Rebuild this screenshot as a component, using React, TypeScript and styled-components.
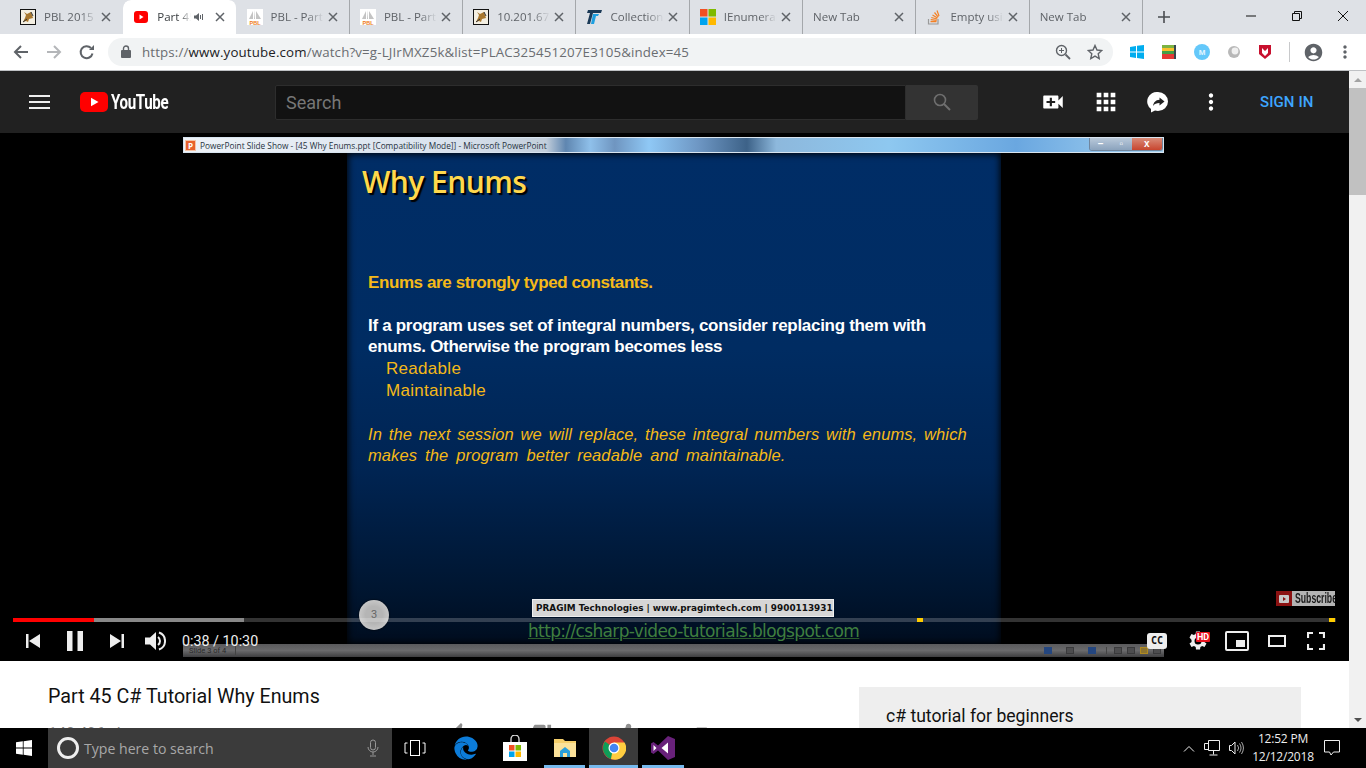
import React from "react";
import styled, { createGlobalStyle } from "styled-components";
import {
  MdThumbUp,
  MdThumbDown,
  MdShare,
  MdPlaylistAdd,
  MdVideoCall,
  MdApps,
  MdMoreVert,
  MdAccountCircle,
} from "react-icons/md";
import { FaEdge } from "react-icons/fa";

const Global = createGlobalStyle`
  html, body { margin: 0; padding: 0; overflow: hidden; background: #fff; }
  * { box-sizing: border-box; }
  svg { display: block; flex: none; }
`;

const Screen = styled.div`
  width: 1366px;
  height: 768px;
  display: flex;
  flex-direction: column;
  font-family: Roboto, "Liberation Sans", sans-serif;
  overflow: hidden;
`;

/* ---- chrome tab strip ---- */
const TabStrip = styled.div`
  height: 34px;
  background: #dee1e6;
  display: flex;
  padding-left: 10px;
  flex: none;
`;
const TabBox = styled.div<{ $active?: boolean; $sep?: boolean }>`
  width: 113.3px;
  height: 34px;
  display: flex;
  align-items: center;
  padding: 0 11px 1px 10px;
  flex: none;
  background: ${(p) => (p.$active ? "#fff" : "transparent")};
  border-radius: ${(p) => (p.$active ? "8px 8px 0 0" : "0")};
  border-right: 1px solid ${(p) => (p.$sep ? "#a4a7ab" : "transparent")};
  background-clip: padding-box;
`;
const TabIconSlot = styled.div`
  width: 16px;
  height: 16px;
  margin-right: 8px;
  flex: none;
`;
const TabTitle = styled.div<{ $active?: boolean }>`
  flex: 1;
  min-width: 0;
  font-family: "Open Sans", "Liberation Sans", sans-serif;
  font-size: 11.5px;
  white-space: nowrap;
  overflow: hidden;
  color: ${(p) => (p.$active ? "#3c4043" : "#5f6368")};
  -webkit-mask-image: linear-gradient(to right, #000 68%, transparent 100%);
  mask-image: linear-gradient(to right, #000 68%, transparent 100%);
`;
const TabClose = styled.div`
  width: 10px;
  height: 10px;
  flex: none;
  margin-left: 4px;
`;
const NewTab = styled.div`
  width: 42px;
  display: flex;
  align-items: center;
  justify-content: center;
`;
const WindowButtons = styled.div`
  margin-left: auto;
  display: flex;
`;
const WindowButton = styled.div`
  width: 46px;
  height: 32px;
  display: flex;
  align-items: center;
  justify-content: center;
`;

/* ---- chrome toolbar ---- */
const Toolbar = styled.div`
  height: 37px;
  background: #fff;
  border-bottom: 1px solid #bfc1c4;
  display: flex;
  align-items: center;
  padding-left: 12px;
  flex: none;
`;
const NavIcon = styled.div`
  width: 33px;
  height: 28px;
  display: flex;
  align-items: center;
  justify-content: flex-start;
  padding-left: 1px;
`;
const Omnibox = styled.div`
  width: 1005px;
  height: 28px;
  margin-left: -3px;
  margin-bottom: 1px;
  border-radius: 14px;
  background: #f1f3f4;
  display: flex;
  align-items: center;
  padding: 0 10px 0 13px;
`;
const Url = styled.div`
  margin-left: 11px;
  font-family: "Open Sans", "Liberation Sans", sans-serif;
  font-size: 13.3px;
  letter-spacing: 0.15px;
  color: #6a6d71;
  white-space: nowrap;
  flex: 1;
  b {
    font-weight: 400;
    color: #202124;
  }
`;
const OmniIcons = styled.div`
  display: flex;
  gap: 16px;
  align-items: center;
`;
const ExtIcons = styled.div`
  display: flex;
  align-items: center;
  gap: 16px;
  margin-left: 16px;
`;
const ToolbarDivider = styled.div`
  width: 1px;
  height: 20px;
  background: #c8c9cb;
  margin: 0 13px 0 16px;
`;

/* ---- page ---- */
const Viewport = styled.div`
  flex: 1;
  min-height: 0;
  display: flex;
`;
const Page = styled.div`
  flex: 1;
  min-width: 0;
  overflow: hidden;
  display: flex;
  flex-direction: column;
`;
const Scrollbar = styled.div`
  width: 17px;
  background: #f1f1f1;
  display: flex;
  flex-direction: column;
  align-items: center;
  flex: none;
`;
const ScrollArrow = styled.div<{ $down?: boolean }>`
  height: 17px;
  width: 100%;
  display: flex;
  align-items: center;
  justify-content: center;
  &::after {
    content: "";
    border-left: 4px solid transparent;
    border-right: 4px solid transparent;
    ${(p) => (p.$down ? "border-top: 4px solid #505050;" : "border-bottom: 4px solid #a3a3a3;")}
  }
`;
const ScrollThumb = styled.div`
  width: 100%;
  height: 107px;
  background: #c1c1c1;
`;
const ScrollTrack = styled.div`
  flex: 1;
`;

const Masthead = styled.header`
  height: 62px;
  background: #212121;
  display: flex;
  align-items: center;
  flex: none;
  padding-left: 29px;
`;
const Burger = styled.div`
  width: 21px;
  height: 14px;
  border-top: 2px solid #eee;
  border-bottom: 2px solid #eee;
  position: relative;
  margin-right: 30px;
  &::after {
    content: "";
    position: absolute;
    left: 0;
    right: 0;
    top: 4px;
    height: 2px;
    background: #eee;
  }
`;
const Logo = styled.div`
  width: 167px;
  display: flex;
  align-items: center;
  gap: 3px;
  margin-right: 28px;
`;
const LogoWord = styled.span`
  display: inline-block;
  font-family: Roboto, sans-serif;
  font-weight: 700;
  font-size: 21px;
  letter-spacing: -0.5px;
  color: #fff;
  transform: scaleX(0.72);
  transform-origin: left center;
`;
const SearchBox = styled.div`
  width: 703px;
  height: 35px;
  display: flex;
  margin-right: 49px;
`;
const SearchInput = styled.div`
  flex: 1;
  background: #121212;
  border: 1px solid #2d2d2d;
  border-radius: 2px 0 0 2px;
  color: #777;
  font-size: 18px;
  line-height: 33px;
  padding-left: 10px;
`;
const SearchButton = styled.div`
  width: 72px;
  background: #333;
  border-radius: 0 2px 2px 0;
  display: flex;
  align-items: center;
  justify-content: center;
`;
const HeadIcons = styled.div`
  display: flex;
  align-items: center;
`;
const HeadIcon = styled.div`
  width: 52.5px;
  display: flex;
  justify-content: center;
`;
const SignIn = styled.div`
  margin-left: 23px;
  color: #3ea6ff;
  font-size: 15px;
  font-weight: 500;
  letter-spacing: 0.1px;
`;

/* ---- video ---- */
const Video = styled.section`
  height: 528px;
  background: #000;
  position: relative;
  flex: none;
  padding: 4px 0 0 183px;
  overflow: hidden;
`;
const SlideShow = styled.div`
  width: 981px;
  display: flex;
  flex-direction: column;
`;
const PptBar = styled.div`
  height: 16px;
  border: 1px solid #d8e4ef;
  background: linear-gradient(
    to right,
    #eef3f8 0%,
    #d8e1ec 28%,
    #c2cedb 37%,
    #5f86b0 39%,
    #8fc0ea 41.5%,
    #6f95c0 44%,
    #8fc8f5 47.5%,
    #6e97c4 52.5%,
    #3d6288 57.5%,
    #8db8dc 60.5%,
    #8ec8f0 72%,
    #6aa7e0 85%,
    #a6d4f2 100%
  );
  display: flex;
  align-items: center;
  padding-left: 1px;
  font-family: "Open Sans", "Liberation Sans", sans-serif;
  font-size: 8.3px;
  color: #26323e;
  white-space: nowrap;
`;
const PptLogo = styled.div`
  width: 11px;
  height: 11px;
  background: #e8622c;
  border: 1px solid #f5c4a8;
  color: #fff;
  font-size: 8px;
  font-weight: 700;
  line-height: 9px;
  text-align: center;
  margin-right: 4px;
`;
const PptButtons = styled.div`
  margin-left: auto;
  height: 13px;
  margin-top: -2px;
  width: 74px;
  display: flex;
  border: 1px solid #70869e;
  border-top: 0;
  border-radius: 0 0 3px 3px;
  overflow: hidden;
`;
const PptBtn = styled.div<{ $close?: boolean; $wide?: boolean }>`
  flex: ${(p) => (p.$wide ? 1.45 : 1)};
  background: ${(p) =>
    p.$close
      ? "linear-gradient(#d98b78, #c8452e)"
      : "linear-gradient(#b9c9da, #8ba3bd)"};
  color: #fff;
  font-size: 10px;
  font-weight: 700;
  font-family: "Liberation Sans", sans-serif;
  line-height: 12px;
  text-align: center;
`;
const Slide = styled.div`
  width: 654px;
  height: 491px;
  margin-left: 164px;
  padding: 11px 21px 0;
  display: flex;
  flex-direction: column;
  background: linear-gradient(#002d66 0%, #002c62 40%, #002452 65%, #00152f 90%, #000d1f 100%);
  box-shadow: inset 0 0 7px 1px #000;
  font-family: "Liberation Sans", sans-serif;
`;
const SlideTitle = styled.h1`
  margin: 0 0 0 -6px;
  font-family: "Open Sans", "Liberation Sans", sans-serif;
  font-size: 30px;
  line-height: 36px;
  font-weight: 600;
  letter-spacing: -0.55px;
  color: #ffd84d;
  text-shadow: 2px 2px 1px #000;
`;
const SlideLine = styled.p<{ $tone: "gold" | "white"; $gap?: number }>`
  margin: ${(p) => p.$gap ?? 0}px 0 0;
  font-size: 17px;
  line-height: 21.7px;
  font-weight: 700;
  letter-spacing: ${(p) => (p.$tone === "gold" ? "-0.4px" : "-0.3px")};
  color: ${(p) => (p.$tone === "gold" ? "#f5b918" : "#fff")};
  white-space: nowrap;
`;
const SlideItem = styled.p`
  margin: 0 0 0 18px;
  font-size: 17px;
  line-height: 21.7px;
  letter-spacing: 0.3px;
  color: #f5b918;
  white-space: nowrap;
`;
const SlideNote = styled.p<{ $gap?: number; $spread: number }>`
  margin: ${(p) => p.$gap ?? 0}px 0 0;
  font-size: 16.5px;
  line-height: 21.5px;
  font-style: italic;
  color: #f5b918;
  word-spacing: ${(p) => p.$spread}px;
  letter-spacing: 0.1px;
  white-space: nowrap;
`;
const CompanyTag = styled.div`
  margin-top: auto;
  margin-left: 164px;
  width: 302px;
  height: 18px;
  background: #d6d6d6;
  border: 1px solid #eee;
  color: #111;
  font-size: 8.9px;
  font-weight: 700;
  line-height: 16px;
  padding-left: 3px;
  font-family: "DejaVu Sans", sans-serif;
  white-space: nowrap;
  overflow: hidden;
`;
const SiteLink = styled.div`
  margin: 4px 0 3px 160px;
  color: #3f7f3f;
  font-size: 17px;
  line-height: 20px;
  text-decoration: underline;
  text-decoration-color: #2c5c2c;
  font-family: "DejaVu Sans", sans-serif;
  letter-spacing: -0.65px;
  white-space: nowrap;
`;
const PptStatus = styled.div`
  width: 981px;
  height: 13px;
  background: linear-gradient(#5a5a5c, #6a6a6c 50%, #3e3e40);
  display: flex;
  align-items: center;
`;
const SlideCount = styled.span`
  width: 53px;
  padding-left: 6px;
  font-size: 7.5px;
  color: #2a2a2a;
  border-right: 1px solid #444;
  white-space: nowrap;
`;
const PptNav = styled.div`
  margin-left: auto;
  display: flex;
  align-items: center;
  gap: 14px;
  padding-right: 10px;
  margin-right: 7px;
  border-right: 1px solid #444;
`;
const PptViews = styled.div`
  display: flex;
  align-items: center;
  gap: 5px;
  padding-right: 3px;
`;
const PptDot = styled.div<{ $tint?: "blue" | "gold" }>`
  width: 8px;
  height: 7px;
  background: ${(p) =>
    p.$tint === "blue" ? "#24467f" : p.$tint === "gold" ? "#8d7430" : "#4d4d4f"};
  border: 1px solid ${(p) =>
    p.$tint === "blue" ? "#24467f" : p.$tint === "gold" ? "#b08a20" : "#3a3a3c"};
`;

const Subscribe = styled.div`
  position: absolute;
  left: 1276px;
  top: 458px;
  height: 15px;
  width: 59px;
  display: flex;
  background: #b4b4b4;
  overflow: hidden;
`;
const SubscribeMark = styled.div`
  width: 16px;
  background: #8b1212;
  display: flex;
  align-items: center;
  justify-content: center;
  flex: none;
`;
const SubscribeWord = styled.span`
  display: inline-block;
  margin-left: 3px;
  font-family: "Liberation Sans", sans-serif;
  font-weight: 700;
  font-size: 14px;
  line-height: 15px;
  color: #1a1a1a;
  transform: scaleX(0.62);
  transform-origin: left center;
  white-space: nowrap;
`;
const SlideCursor = styled.div`
  position: absolute;
  left: 359px;
  top: 467px;
  width: 30px;
  height: 30px;
  border-radius: 50%;
  background: radial-gradient(#b5b5b5 40%, #d8d8d8 100%);
  color: #666;
  font-size: 11px;
  line-height: 30px;
  text-align: center;
  box-shadow: 0 0 2px #000;
`;
const Progress = styled.div`
  position: absolute;
  left: 13px;
  right: 13px;
  top: 485px;
  height: 4px;
  background: rgba(255, 255, 255, 0.2);
  display: flex;
`;
const ProgressPlayed = styled.div`
  width: 81px;
  background: #f00;
`;
const ProgressBuffered = styled.div`
  width: 150px;
  background: rgba(255, 255, 255, 0.42);
`;
const AdMark = styled.div<{ $at: number }>`
  position: absolute;
  left: ${(p) => p.$at}px;
  top: 0;
  width: 6px;
  height: 4px;
  background: #fc0;
`;
const Controls = styled.div`
  position: absolute;
  left: 0;
  right: 0;
  bottom: 0;
  height: 40px;
  display: flex;
  align-items: center;
  padding: 0 13px 0 20px;
  color: #eee;
`;
const CtlButton = styled.div<{ $w: number }>`
  width: ${(p) => p.$w}px;
  display: flex;
  justify-content: center;
  position: relative;
  flex: none;
`;
const TimeText = styled.span`
  font-size: 14.3px;
  color: #eee;
  margin-left: 1px;
`;
const CtlRight = styled.div`
  margin-left: auto;
  display: flex;
  align-items: center;
`;
const CcBox = styled.div`
  width: 20px;
  height: 16px;
  background: #eee;
  border-radius: 3px;
  color: #111;
  font-family: "DejaVu Sans Mono", monospace;
  font-weight: 700;
  font-size: 10px;
  line-height: 16px;
  text-align: center;
`;
const HdBadge = styled.span`
  position: absolute;
  top: 3px;
  left: 19px;
  background: #e8101c;
  color: #fff;
  font-size: 9px;
  font-weight: 700;
  line-height: 10px;
  padding: 0 1px;
  border-radius: 1px;
`;

/* ---- below the video ---- */
const Below = styled.div`
  flex: 1;
  display: flex;
  background: #fff;
  padding-left: 48px;
`;
const Primary = styled.div`
  width: 811px;
  padding-top: 24px;
  flex: none;
`;
const VideoTitle = styled.h2`
  margin: 0;
  font-size: 19.7px;
  font-weight: 400;
  line-height: 24px;
  color: #111;
`;
const MetaRow = styled.div`
  display: flex;
  align-items: center;
  margin-top: 12px;
  height: 24px;
`;
const Views = styled.span`
  color: #888;
  font-size: 16px;
  width: 400px;
`;
const Actions = styled.div`
  display: flex;
  gap: 60px;
  color: #909090;
`;
const Sidebar = styled.aside`
  width: 442px;
  height: 80px;
  margin-top: 26px;
  background: #eee;
  padding: 18px 27px;
  font-size: 17.6px;
  line-height: 22px;
  color: #111;
`;

/* ---- windows taskbar ---- */
const Taskbar = styled.footer`
  height: 40px;
  background: #000;
  display: flex;
  align-items: stretch;
  flex: none;
  color: #fff;
`;
const StartButton = styled.div`
  width: 48px;
  display: flex;
  align-items: center;
  justify-content: center;
`;
const WinSearch = styled.div`
  width: 344px;
  background: #3b3b3b;
  display: flex;
  align-items: center;
  padding: 0 13px 0 9px;
`;
const Cortana = styled.div`
  width: 22px;
  height: 22px;
  border: 3px solid #eee;
  border-radius: 50%;
  margin-right: 5px;
`;
const WinSearchText = styled.span`
  flex: 1;
  font-family: "Open Sans", "Liberation Sans", sans-serif;
  font-size: 14.1px;
  color: #a8a8a8;
`;
const TaskButton = styled.div<{ $open?: boolean; $current?: boolean }>`
  width: 49.3px;
  display: flex;
  align-items: center;
  justify-content: center;
  position: relative;
  background: ${(p) => (p.$current ? "#3b3b3b" : "transparent")};
  ${(p) =>
    p.$open &&
    `&::after {
      content: "";
      position: absolute;
      left: ${p.$current ? 0 : 4}px;
      right: ${p.$current ? 0 : 4}px;
      bottom: 0;
      height: 3px;
      background: #76b9ed;
    }`}
`;
const TaskButtons = styled.div`
  display: flex;
`;
const Tray = styled.div`
  margin-left: auto;
  display: flex;
  align-items: center;
  padding-right: 26px;
`;
const TrayIcons = styled.div`
  display: flex;
  align-items: center;
  gap: 9px;
`;
const Clock = styled.div`
  width: 70px;
  margin: 0 6px 0 3px;
  text-align: center;
  font-family: "Open Sans", "Liberation Sans", sans-serif;
  font-size: 12px;
  line-height: 18px;
  color: #eee;
  letter-spacing: -0.2px;
`;

/* ---- small drawings ---- */
const Cross = ({ color = "#5f6368" }: { color?: string }) => (
  <svg width="10" height="10" viewBox="0 0 10 10">
    <path d="M1 1l8 8M9 1l-8 8" stroke={color} strokeWidth="1.5" />
  </svg>
);
const TomcatIcon = () => (
  <svg width="16" height="16" viewBox="0 0 16 16">
    <rect x=".5" y=".5" width="15" height="15" fill="#f4efe2" stroke="#111" />
    <path d="M3 13l2-4 1-3-2-3 3 2 4-2 1 3 1 3-4 1-1 3-2-1z" fill="#a9782f" />
    <path d="M3 13l4-3M11 3l2 4" stroke="#333" />
  </svg>
);
const PblIcon = () => (
  <svg width="16" height="16" viewBox="0 0 16 16">
    <rect width="16" height="16" fill="#fff" />
    <path d="M2 10l4-8v8zM7 10V1l1 9zM9 2l5 8H9z" fill="#c3c3c3" />
    <text x="8" y="15.500" textAnchor="middle" fontSize="5.500" fontWeight="700" fill="#ee7b22" fontFamily="Liberation Sans">PBL</text>
  </svg>
);
const YtFavicon = () => (
  <svg width="16" height="16" viewBox="0 0 16 16">
    <rect x="1" y="2" width="14" height="12" rx="3" fill="#f00" />
    <path d="M6.500 5.500l4 2.500-4 2.500z" fill="#fff" />
  </svg>
);
const TIcon = () => (
  <svg width="16" height="16" viewBox="0 0 16 16">
    <path d="M2 1h14l-1 3H7L4 15H1L4 4H1z" fill="#1b3a57" />
    <path d="M7 5h6l-1 2h-2L8 15H5z" fill="#1e9fe0" />
  </svg>
);
const MsIcon = () => (
  <svg width="16" height="16" viewBox="0 0 16 16">
    <rect width="7.500" height="7.500" fill="#f25022" />
    <rect x="8.500" width="7.500" height="7.500" fill="#7fba00" />
    <rect y="8.500" width="7.500" height="7.500" fill="#00a4ef" />
    <rect x="8.500" y="8.500" width="7.500" height="7.500" fill="#ffb900" />
  </svg>
);
const SoIcon = () => (
  <svg width="16" height="16" viewBox="0 0 16 16">
    <path d="M2.500 10v5h9.500v-5" fill="none" stroke="#9a9a9a" strokeWidth="1.200" />
    <path d="M4.500 12.700h6M4.700 10.700l6 .6M5.300 8.500l5.800 1.500M6.500 6l5 3M8.500 3.500l3.800 4.600M11 1.500l2 5.500" stroke="#f48024" strokeWidth="1.200" fill="none" />
  </svg>
);

const tabs = [
  { title: "PBL 2015", icon: <TomcatIcon /> },
  { title: "Part 45 C# Tutorial", icon: <YtFavicon />, active: true },
  { title: "PBL - Part 45", icon: <PblIcon />, sep: true },
  { title: "PBL - Part 46", icon: <PblIcon />, sep: true },
  { title: "10.201.67.12", icon: <TomcatIcon />, sep: true },
  { title: "Collections in", icon: <TIcon />, sep: true },
  { title: "IEnumerable", icon: <MsIcon />, sep: true },
  { title: "New Tab", sep: true },
  { title: "Empty using", icon: <SoIcon />, sep: true },
  { title: "New Tab", sep: true },
];

const SpeakerTiny = () => (
  <svg width="12" height="12" viewBox="0 0 12 12" style={{ marginLeft: 2, marginRight: 6 }}>
    <path d="M1 4.500h2L6 2v8L3 7.500H1z" fill="#5f6368" />
    <path d="M7.500 4v4M9.500 3v6" stroke="#5f6368" />
  </svg>
);

function App() {
  return (
    <Screen>
      <Global />
      <TabStrip>
        {tabs.map((t, i) => (
          <TabBox key={i} $active={t.active} $sep={t.sep}>
            {t.icon ? <TabIconSlot>{t.icon}</TabIconSlot> : null}
            <TabTitle $active={t.active}>{t.title}</TabTitle>
            {t.active ? <SpeakerTiny /> : null}
            <TabClose>
              <Cross />
            </TabClose>
          </TabBox>
        ))}
        <NewTab>
          <svg width="12" height="12" viewBox="0 0 12 12">
            <path d="M6 0v12M0 6h12" stroke="#4a4d51" strokeWidth="1.600" />
          </svg>
        </NewTab>
        <WindowButtons>
          <WindowButton>
            <svg width="10" height="10" viewBox="0 0 10 10">
              <path d="M0 5h10" stroke="#111" />
            </svg>
          </WindowButton>
          <WindowButton>
            <svg width="10" height="10" viewBox="0 0 10 10">
              <path d="M.5 2.500h7v7h-7zM2.500 2.500v-2h7v7h-2" fill="none" stroke="#111" />
            </svg>
          </WindowButton>
          <WindowButton>
            <svg width="10" height="10" viewBox="0 0 10 10">
              <path d="M0 0l10 10M10 0L0 10" stroke="#111" />
            </svg>
          </WindowButton>
        </WindowButtons>
      </TabStrip>

      <Toolbar>
        <NavIcon>
          <svg width="16" height="16" viewBox="0 0 16 16">
            <path d="M15 8H2M8 2L2 8l6 6" fill="none" stroke="#5f6368" strokeWidth="2" />
          </svg>
        </NavIcon>
        <NavIcon>
          <svg width="16" height="16" viewBox="0 0 16 16">
            <path d="M1 8h13M8 2l6 6-6 6" fill="none" stroke="#b4b6b9" strokeWidth="2" />
          </svg>
        </NavIcon>
        <NavIcon>
          <svg width="16" height="16" viewBox="0 0 16 16">
            <path d="M13.500 9.500A6 6 0 1 1 12 4" fill="none" stroke="#5f6368" strokeWidth="2" />
            <path d="M10 6h5V1z" fill="#5f6368" />
          </svg>
        </NavIcon>
        <Omnibox>
          <svg width="10" height="13" viewBox="0 0 10 13">
            <path d="M2.500 5V3.500a2.500 2.500 0 0 1 5 0V5" fill="none" stroke="#5f6368" strokeWidth="1.400" />
            <rect y="5" width="10" height="8" rx="1" fill="#5f6368" />
          </svg>
          <Url>
            https://<b>www.youtube.com</b>/watch?v=g-LJIrMXZ5k&amp;list=PLAC325451207E3105&amp;index=45
          </Url>
          <OmniIcons>
            <svg width="16" height="16" viewBox="0 0 16 16">
              <circle cx="6.500" cy="6.500" r="5" fill="none" stroke="#5f6368" strokeWidth="1.400" />
              <path d="M10.500 10.500L15 15" stroke="#5f6368" strokeWidth="1.800" />
              <path d="M6.500 4v5M4 6.500h5" stroke="#5f6368" />
            </svg>
            <svg width="16" height="16" viewBox="0 0 16 16">
              <path d="M8 1.500l2 4.500 4.800.5-3.600 3.200 1 4.800L8 12.100l-4.200 2.400 1-4.800L1.200 6.500 6 6z" fill="none" stroke="#5f6368" strokeWidth="1.400" />
            </svg>
          </OmniIcons>
        </Omnibox>
        <ExtIcons>
          <svg width="16" height="16" viewBox="0 0 16 16">
            <path d="M1 3l6-1v5.500H1zM8 1.800L15 1v6.500H8zM1 8.500h6V14l-6-1zM8 8.500h7V15l-7-1z" fill="#00adef" />
          </svg>
          <svg width="16" height="16" viewBox="0 0 16 16">
            <rect x="1" y="1" width="12" height="3" fill="#7cb342" />
            <rect x="1" y="4" width="12" height="3" fill="#fbc02d" />
            <rect x="1" y="7" width="12" height="3" fill="#43a047" />
            <rect x="1" y="10" width="12" height="5" fill="#e53935" />
            <rect x="13" y="1" width="2" height="14" fill="#37474f" />
          </svg>
          <svg width="18" height="18" viewBox="0 0 18 18">
            <circle cx="9" cy="9" r="8" fill="#64c8fa" />
            <text x="9" y="12" textAnchor="middle" fontSize="8" fontWeight="700" fill="#e4f6ff" fontFamily="Liberation Sans">M</text>
          </svg>
          <svg width="14" height="14" viewBox="0 0 14 14">
            <circle cx="7" cy="7" r="6" fill="#b8b8b8" />
            <circle cx="8" cy="6" r="3.400" fill="#f0f0f0" />
          </svg>
          <svg width="16" height="16" viewBox="0 0 16 16">
            <path d="M2 1h12v9l-6 5-6-5z" fill="#c8102e" />
            <path d="M5 4l3 3 3-3v5l-3 3-3-3z" fill="#fff" />
          </svg>
        </ExtIcons>
        <ToolbarDivider />
        <MdAccountCircle size={21} color="#5f6368" />
        <MdMoreVert size={20} color="#5f6368" style={{ marginLeft: 11 }} />
      </Toolbar>

      <Viewport>
        <Page>
          <Masthead>
            <Burger />
            <Logo>
              <svg width="28" height="20" viewBox="0 0 28 20">
                <rect width="28" height="20" rx="5" fill="#f00" />
                <path d="M11 5.700L18.500 10 11 14.300z" fill="#fff" />
              </svg>
              <LogoWord>YouTube</LogoWord>
            </Logo>
            <SearchBox>
              <SearchInput>Search</SearchInput>
              <SearchButton>
                <svg width="18" height="18" viewBox="0 0 18 18">
                  <circle cx="7" cy="7" r="5.500" fill="none" stroke="#6f6f6f" strokeWidth="1.600" />
                  <path d="M11 11l6 6" stroke="#6f6f6f" strokeWidth="2" />
                </svg>
              </SearchButton>
            </SearchBox>
            <HeadIcons>
              <HeadIcon>
                <MdVideoCall size={26} color="#fff" />
              </HeadIcon>
              <HeadIcon>
                <MdApps size={28} color="#fff" />
              </HeadIcon>
              <HeadIcon>
                <svg width="22" height="22" viewBox="0 0 22 22">
                  <path d="M11 1a10 9.500 0 0 1 0 19c-1 0-2-.1-3-.4L4 21.500V18A9.500 9.500 0 0 1 11 1z" fill="#fff" />
                  <path d="M12.500 6.500l5 4-5 4V12c-3 0-5 .8-6.500 3 .5-3.500 2.500-6 6.500-6.300z" fill="#212121" />
                </svg>
              </HeadIcon>
              <HeadIcon>
                <MdMoreVert size={26} color="#fff" />
              </HeadIcon>
            </HeadIcons>
            <SignIn>SIGN IN</SignIn>
          </Masthead>

          <Video>
            <SlideShow>
              <PptBar>
                <PptLogo>P</PptLogo>
                PowerPoint Slide Show - [45 Why Enums.ppt [Compatibility Mode]] - Microsoft PowerPoint
                <PptButtons>
                  <PptBtn>–</PptBtn>
                  <PptBtn>▫</PptBtn>
                  <PptBtn $close $wide>x</PptBtn>
                </PptButtons>
              </PptBar>
              <Slide>
                <SlideTitle>Why Enums</SlideTitle>
                <SlideLine $tone="gold" $gap={72}>Enums are strongly typed constants.</SlideLine>
                <SlideLine $tone="white" $gap={21}>If a program uses set of integral numbers, consider replacing them with</SlideLine>
                <SlideLine $tone="white">enums. Otherwise the program becomes less</SlideLine>
                <SlideItem>Readable</SlideItem>
                <SlideItem>Maintainable</SlideItem>
                <SlideNote $gap={22} $spread={2.1}>
                  In the next session we will replace, these integral numbers with enums, which
                </SlideNote>
                <SlideNote $spread={3.3}>makes the program better readable and maintainable.</SlideNote>
                <CompanyTag>PRAGIM Technologies | www.pragimtech.com | 9900113931</CompanyTag>
                <SiteLink>http://csharp-video-tutorials.blogspot.com</SiteLink>
              </Slide>
              <PptStatus>
                <SlideCount>Slide 3 of 4</SlideCount>
                <PptNav>
                  <PptDot $tint="blue" />
                  <PptDot />
                  <PptDot $tint="blue" />
                </PptNav>
                <PptViews>
                  <PptDot />
                  <PptDot />
                  <PptDot $tint="gold" />
                  <PptDot />
                </PptViews>
              </PptStatus>
            </SlideShow>

            <Subscribe>
              <SubscribeMark>
                <svg width="10" height="8" viewBox="0 0 10 8">
                  <rect width="10" height="8" rx="1" fill="#c8c8c8" />
                  <path d="M4 2l3 2-3 2z" fill="#8b1212" />
                </svg>
              </SubscribeMark>
              <SubscribeWord>Subscribe</SubscribeWord>
            </Subscribe>
            <SlideCursor>3</SlideCursor>
            <Progress>
              <ProgressPlayed />
              <ProgressBuffered />
              <AdMark $at={904} />
              <AdMark $at={1316} />
            </Progress>
            <Controls>
              <CtlButton $w={26}>
                <svg width="16" height="16" viewBox="0 0 16 16">
                  <path d="M1 1h2.500v14H1zM15 1v14L4 8z" fill="#eee" />
                </svg>
              </CtlButton>
              <CtlButton $w={58}>
                <svg width="16" height="20" viewBox="0 0 16 20">
                  <path d="M0 0h5.500v20H0zM10.500 0H16v20h-5.500z" fill="#eee" />
                </svg>
              </CtlButton>
              <CtlButton $w={25}>
                <svg width="16" height="16" viewBox="0 0 16 16">
                  <path d="M1 1l11 7-11 7zM12.500 1H15v14h-2.500z" fill="#eee" />
                </svg>
              </CtlButton>
              <CtlButton $w={52}>
                <svg width="22" height="22" viewBox="0 0 22 22">
                  <path d="M1 7.500h5L12 2v18l-6-5.500H1z" fill="#eee" />
                  <path d="M14 7a5 5 0 0 1 0 8" fill="none" stroke="#eee" strokeWidth="2" />
                  <path d="M15 2.500a9 9 0 0 1 0 17" fill="none" stroke="#eee" strokeWidth="2" />
                </svg>
              </CtlButton>
              <TimeText>0:38 / 10:30</TimeText>
              <CtlRight>
                <CtlButton $w={40}>
                  <CcBox>CC</CcBox>
                </CtlButton>
                <CtlButton $w={40}>
                  <svg width="24" height="24" viewBox="0 0 24 24">
                    <path d="M19.400 13a7.500 7.500 0 0 0 0-2l2.100-1.600-2-3.500-2.500 1a7.500 7.500 0 0 0-1.700-1L15 2.500h-4L10.600 5a7.500 7.500 0 0 0-1.700 1l-2.400-1-2 3.500L6.600 11a7.500 7.500 0 0 0 0 2l-2.100 1.600 2 3.500 2.500-1a7.500 7.500 0 0 0 1.700 1l.3 2.400h4l.4-2.500a7.500 7.500 0 0 0 1.700-1l2.400 1 2-3.500zM13 15.500a3.500 3.500 0 1 1 0-7 3.500 3.500 0 0 1 0 7z" fill="#eee" />
                  </svg>
                  <HdBadge>HD</HdBadge>
                </CtlButton>
                <CtlButton $w={40}>
                  <svg width="24" height="20" viewBox="0 0 24 20">
                    <rect x="1" y="1" width="22" height="18" rx="1" fill="none" stroke="#eee" strokeWidth="2" />
                    <rect x="11" y="9" width="9" height="7" fill="#eee" />
                  </svg>
                </CtlButton>
                <CtlButton $w={39}>
                  <svg width="18" height="12" viewBox="0 0 18 12">
                    <rect x="1" y="1" width="16" height="10" fill="none" stroke="#eee" strokeWidth="2" />
                  </svg>
                </CtlButton>
                <CtlButton $w={40}>
                  <svg width="18" height="18" viewBox="0 0 18 18">
                    <path d="M1 6V1h5M12 1h5v5M17 12v5h-5M6 17H1v-5" fill="none" stroke="#eee" strokeWidth="2.200" />
                  </svg>
                </CtlButton>
              </CtlRight>
            </Controls>
          </Video>

          <Below>
            <Primary>
              <VideoTitle>Part 45 C# Tutorial Why Enums</VideoTitle>
              <MetaRow>
                <Views>140,496 views</Views>
                <Actions>
                  <MdThumbUp size={22} />
                  <MdThumbDown size={22} />
                  <MdShare size={22} />
                  <MdPlaylistAdd size={22} />
                </Actions>
              </MetaRow>
            </Primary>
            <Sidebar>c# tutorial for beginners</Sidebar>
          </Below>
        </Page>
        <Scrollbar>
          <ScrollArrow />
          <ScrollThumb />
          <ScrollTrack />
          <ScrollArrow $down />
        </Scrollbar>
      </Viewport>

      <Taskbar>
        <StartButton>
          <svg width="16" height="16" viewBox="0 0 16 16">
            <path d="M0 2.300l6.800-1V7.600H0zM7.600 1.200L16 0v7.600H7.600zM0 8.400h6.800v6.300l-6.800-1zM7.600 8.400H16V16l-8.400-1.200z" fill="#fff" />
          </svg>
        </StartButton>
        <WinSearch>
          <Cortana />
          <WinSearchText>Type here to search</WinSearchText>
          <svg width="12" height="18" viewBox="0 0 12 18">
            <rect x="3.500" y="1" width="5" height="10" rx="2.500" fill="none" stroke="#999" />
            <path d="M1 8a5 5 0 0 0 10 0M6 13v3M3 17h6" fill="none" stroke="#999" />
          </svg>
        </WinSearch>
        <TaskButtons>
          <TaskButton>
            <svg width="22" height="16" viewBox="0 0 22 16" style={{ marginRight: 4 }}>
              <rect x="6.500" y=".5" width="9" height="15" fill="none" stroke="#fff" />
              <path d="M3.500 3H1v10h2.500M18.500 3H21v10h-2.500" fill="none" stroke="#fff" />
            </svg>
          </TaskButton>
          <TaskButton>
            <FaEdge size={24} color="#0c7cd9" />
          </TaskButton>
          <TaskButton>
            <svg width="24" height="26" viewBox="0 0 24 26">
              <path d="M8 7V4a4 4 0 0 1 8 0v3" fill="none" stroke="#ddd" strokeWidth="1.300" />
              <rect y="7" width="24" height="19" fill="#fff" />
              <rect x="6" y="10" width="5.500" height="5.500" fill="#f25022" />
              <rect x="12.500" y="10" width="5.500" height="5.500" fill="#7fba00" />
              <rect x="6" y="16.500" width="5.500" height="5.500" fill="#00a4ef" />
              <rect x="12.500" y="16.500" width="5.500" height="5.500" fill="#ffb900" />
            </svg>
          </TaskButton>
          <TaskButton $open>
            <svg width="22" height="20" viewBox="0 0 22 20">
              <path d="M0 1h9l2 2h11v16H0z" fill="#f5cf6b" />
              <path d="M0 5h22v14H0z" fill="#fbe29a" />
              <path d="M6 19v-6l5-4 5 4v6z" fill="#2b9fdb" />
              <rect x="9" y="15" width="4" height="4" fill="#fbe29a" />
            </svg>
          </TaskButton>
          <TaskButton $open $current>
            <svg width="24" height="24" viewBox="0 0 24 24">
              <circle cx="12" cy="12" r="11.500" fill="#db4437" />
              <path d="M12 12L3 5.600A11.500 11.500 0 0 0 9 23.100z" fill="#0f9d58" />
              <path d="M12 6.500h10.600A11.500 11.500 0 0 1 9 23.100z" fill="#ffcd40" />
              <circle cx="12" cy="12" r="5.500" fill="#fff" />
              <circle cx="12" cy="12" r="4.300" fill="#4285f4" />
            </svg>
          </TaskButton>
          <TaskButton $open>
            <svg width="24" height="24" viewBox="0 0 24 24">
              <path d="M17 0l7 3v18l-7 3-10-9.500L2.500 18 0 16.500v-9L2.500 6 7 9.500z" fill="#68217a" />
              <path d="M17 6.500L10.500 12l6.500 5.500zM2.500 9v6l3-3z" fill="#fff" />
            </svg>
          </TaskButton>
        </TaskButtons>
        <Tray>
          <TrayIcons>
            <svg width="12" height="7" viewBox="0 0 12 7">
              <path d="M1 6.500l5-5 5 5" fill="none" stroke="#eee" />
            </svg>
            <svg width="16" height="16" viewBox="0 0 16 16">
              <path d="M4.500.5h11v10h-11zM.5 3.500h4v6h-4zM9.500 10.500v4M5.500 15h8" fill="none" stroke="#eee" />
            </svg>
            <svg width="16" height="14" viewBox="0 0 16 14">
              <path d="M.5 4.500h2L6 1v12L2.500 9.500h-2z" fill="none" stroke="#eee" />
              <path d="M8.500 4a5 5 0 0 1 0 6M10.500 2.500a8 8 0 0 1 0 9M12.500 1a11 11 0 0 1 0 12" fill="none" stroke="#aaa" />
            </svg>
          </TrayIcons>
          <Clock>
            12:52 PM
            <br />
            12/12/2018
          </Clock>
          <svg width="16" height="16" viewBox="0 0 16 16">
            <path d="M.5.500h15v11.500H9.500L7 15l-1.500-3h-5z" fill="none" stroke="#eee" />
          </svg>
        </Tray>
      </Taskbar>
    </Screen>
  );
}

export default App;
